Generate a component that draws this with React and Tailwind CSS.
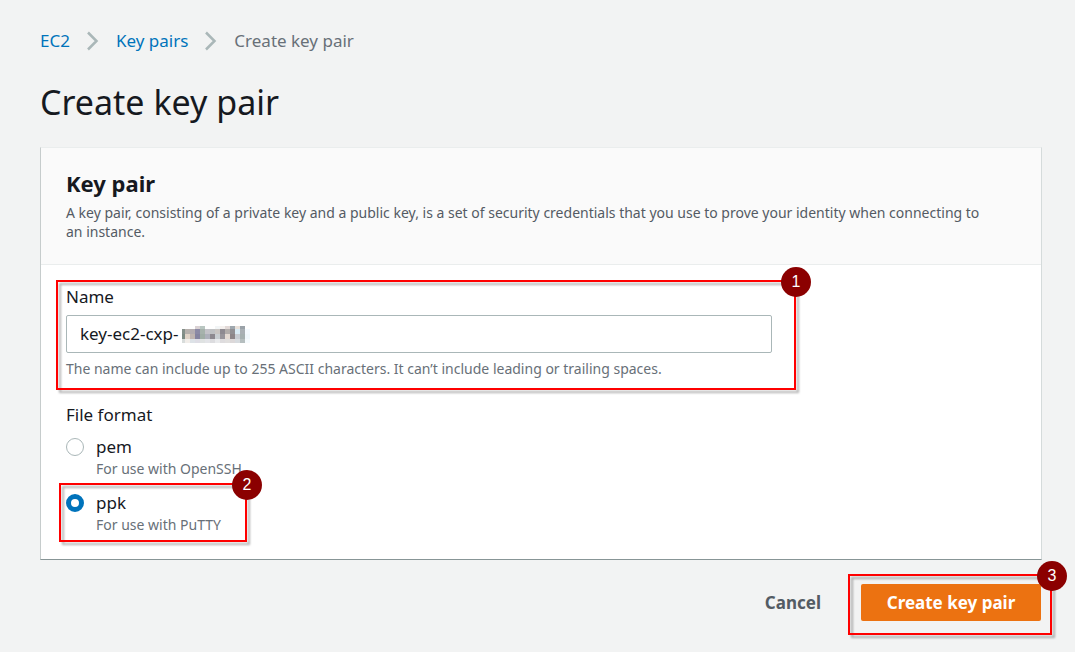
import { useState } from "react";

const MOSAIC_COLUMNS = [0, 3, 8, 13, 18, 23, 28, 33, 38, 43, 48, 53, 58, 63];
const MOSAIC_ROWS = [
  { y: 0, h: 3, cells: ["#fff", "#fff", "#fff", "#dad2d4", "#b9c6c1", "#fff", "#fff", "#f2f5f6", "#f4f0ee", "#e2d9d7", "#9ea7ae", "#e9e1da", "#9aa2a8"] },
  { y: 3, h: 5, cells: ["#85908a", "#b7b1ad", "#b3acb0", "#8b89a5", "#a6b2ac", "#c3c2c8", "#bfc1c3", "#c9c5c2", "#8e8a91", "#b2adab", "#918f93", "#d9ebf5", "#a9b0b5", "#f4faff"] },
  { y: 8, h: 5, cells: ["#7e8b84", "#e0d3c7", "#bfb4b0", "#8583a0", "#a0ada6", "#aeb0bb", "#8d898f", "#c9ced1", "#98959b", "#e4dad3", "#8c8588", "#c8ccd2", "#a5b0b1", "#f0f8fd"] },
  { y: 13, h: 4, cells: ["#d8dcdb", "#f1ede9", "#dde2e7", "#dedde5", "#dfe2e2", "#e3e4e8", "#dcdcdf", "#e9eaec", "#dedcde", "#e1dfde", "#dcd8d9", "#d7dbdf", "#b5bebf", "#f6fbfe"] },
];

function Mosaic({ className }) {
  return (
    <svg aria-hidden="true" width="68" height="17" viewBox="0 0 68 17" shapeRendering="crispEdges" className={className}>
      {MOSAIC_ROWS.map((row) =>
        row.cells.map((fill, i) => (
          <rect key={row.y + "-" + i} x={MOSAIC_COLUMNS[i]} y={row.y} width="5" height={row.h} fill={fill} />
        ))
      )}
    </svg>
  );
}

function Callout({ number, className }) {
  return (
    <div className={"pointer-events-none absolute z-10 " + className}>
      <div className="h-full border-2 border-[#ff0000] drop-shadow-[3px_3px_1px_rgba(0,0,0,0.3)]" />
      <span className="absolute -top-[13px] -right-[15px] flex size-[30px] items-center justify-center rounded-full bg-[#8b0000] font-['Liberation_Sans',sans-serif] text-base text-white">
        {number}
      </span>
    </div>
  );
}

function Separator() {
  return (
    <svg aria-hidden="true" width="12" height="20" viewBox="0 0 12 20" fill="none" stroke="#aab7b8" strokeWidth="2.5">
      <path d="M1 1.5 9.5 10 1 18.5" />
    </svg>
  );
}

function FormatOption({ value, hint, checked, onSelect }) {
  return (
    <label className="flex gap-3">
      <input
        type="radio"
        name="format"
        value={value}
        checked={checked}
        onChange={onSelect}
        className="mt-[3px] size-[18px] shrink-0 appearance-none rounded-full border border-[#aab7b8] bg-white checked:border-[5px] checked:border-[#0073bb]"
      />
      <span>
        <span className="block text-[17px] leading-6 text-[#16191f]">{value}</span>
        <span className="block text-sm leading-5 text-[#687078]">{hint}</span>
      </span>
    </label>
  );
}

export default function App() {
  const [name, setName] = useState("key-ec2-cxp-");
  const [format, setFormat] = useState("ppk");

  return (
    <div className="min-h-screen bg-[#f2f3f3] pt-[29px] pr-[33px] pb-4 pl-10 font-['Noto_Sans',sans-serif] text-[#16191f]">
      <nav aria-label="Breadcrumb">
        <ol className="flex items-center gap-[17px] text-[17px] leading-6">
          <li><a href="#ec2" className="text-[#0073bb]">EC2</a></li>
          <li aria-hidden="true"><Separator /></li>
          <li><a href="#key-pairs" className="text-[#0073bb]">Key pairs</a></li>
          <li aria-hidden="true"><Separator /></li>
          <li className="text-[#687078]">Create key pair</li>
        </ol>
      </nav>
      <h1 className="mt-[25px] text-[34px] leading-12">Create key pair</h1>

      <form onSubmit={(e) => e.preventDefault()}>
        <section className="mt-[21px] border border-t-[#eaeded] border-r-[#d5dbdb] border-b-[#879596] border-l-[#c6cccc] bg-white">
          <header className="border-b border-[#eaeded] bg-[#fafafa] pt-[19px] pr-12 pb-[23px] pl-[25px]">
            <h2 className="text-[22px] leading-8 font-bold">Key pair</h2>
            <p className="mt-1 text-sm leading-[19px] text-[#545b64]">
              A key pair, consisting of a private key and a public key, is a set of security credentials that you use to
              prove your identity when connecting to an instance.
            </p>
          </header>

          <div className="px-[25px] pt-5 pb-6">
            <div className="relative max-w-[706px]">
              <label htmlFor="key-name" className="block text-[17px] leading-6">Name</label>
              <div className="relative mt-1.5">
                <input
                  id="key-name"
                  type="text"
                  value={name}
                  onChange={(e) => setName(e.target.value)}
                  className="block h-[38px] w-full rounded-xs border border-[#aab7b8] bg-white px-[13px] pb-0.5 text-[17px]"
                />
                <Mosaic className="absolute top-[11px] left-[116px]" />
              </div>
              <p className="mt-1.5 text-sm leading-5 text-[#687078]">
                The name can include up to 255 ASCII characters. It can’t include leading or trailing spaces.
              </p>
              <Callout number="1" className="-top-[5px] -right-6 -bottom-[11px] -left-2.5" />
            </div>

            <fieldset className="mt-6">
              <legend className="text-[17px] leading-6">File format</legend>
              <div className="mt-2 flex flex-col items-start gap-3">
                <FormatOption value="pem" hint="For use with OpenSSH" checked={format === "pem"} onSelect={() => setFormat("pem")} />
                <div className="relative">
                  <FormatOption value="ppk" hint="For use with PuTTY" checked={format === "ppk"} onSelect={() => setFormat("ppk")} />
                  <Callout number="2" className="-top-2 -right-[26px] -bottom-[7px] -left-[7px]" />
                </div>
              </div>
            </fieldset>
          </div>
        </section>

        <div className="mt-6 flex items-center justify-end gap-10 pr-px">
          <button type="button" className="text-[17px] leading-6 font-bold text-[#545b64]">Cancel</button>
          <div className="relative">
            <button type="submit" className="block h-[37px] w-[180px] rounded-xs bg-[#ec7211] text-[17px] font-bold text-white">
              Create key pair
            </button>
            <Callout number="3" className="-top-2.5 -right-[11px] -bottom-3.5 -left-[13px]" />
          </div>
        </div>
      </form>
    </div>
  );
}
